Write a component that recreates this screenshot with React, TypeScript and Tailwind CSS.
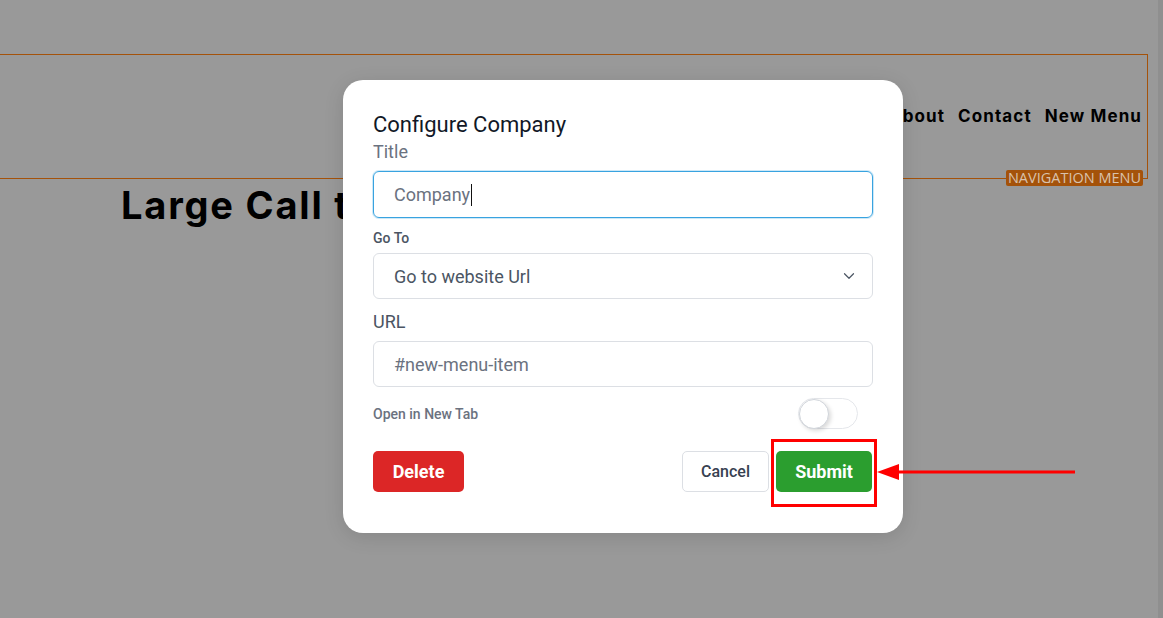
import { ChevronDown } from 'lucide-react';

function Background() {
  return (
    <div className="flex min-h-[618px] bg-[#999999]" style={{ fontFamily: 'Inter, "Open Sans", sans-serif' }}>
      <div className="flex-1">
        <div className="relative mt-[54px] h-[125px] w-[1148px] border-t border-r border-b border-[#a4520a]">
          <nav className="flex h-full items-center justify-end gap-[13px] pr-[5px] pt-[1px] text-[17px] font-bold tracking-[1.1px] text-black">
            <span>About</span>
            <span>Contact</span>
            <span>New Menu</span>
          </nav>
          <span
            className="absolute right-[4px] bottom-[-8px] rounded-[2px] bg-[#a4520a] px-[2px] text-[14.5px] leading-[16px] text-[#d9c2ad]"
            style={{ fontFamily: '"Open Sans", sans-serif' }}
          >
            NAVIGATION MENU
          </span>
        </div>
        <div className="mt-[1px] ml-[121px] w-[222px] overflow-hidden">
          <h1 className="text-[38px] leading-[50px] font-bold tracking-[1.8px] whitespace-nowrap text-black">
            Large Call to Action
          </h1>
        </div>
      </div>
      <div className="w-[5px] bg-[#8f8f8f]" />
    </div>
  );
}

function Toggle() {
  return (
    <div className="mr-[15px] flex h-[31px] w-[60px] items-center rounded-full border border-[#e5e7eb] bg-white">
      <div className="h-[30px] w-[30px] rounded-full border border-[#d1d5db] bg-white shadow-[2px_2px_4px_rgba(0,0,0,0.15)]" />
    </div>
  );
}

function Modal() {
  return (
    <div
      className="absolute top-[80px] left-[343px] w-[560px] rounded-[20px] bg-white px-[30px] pt-[30px] pb-[41px] shadow-[0_4px_20px_rgba(0,0,0,0.12)]"
      style={{ fontFamily: 'Roboto, "Liberation Sans", sans-serif' }}
    >
      <h2 className="text-[22px] leading-[30px] text-[#111827]">Configure Company</h2>
      <label className="mt-[1px] block text-[18px] leading-[22px] text-[#6b7280]">Title</label>
      <div className="mt-[8px] flex h-[47px] items-center rounded-[6px] border border-[#38a3e0] px-[20px] text-[18px] text-[#6b7280] shadow-[0_0_0_1px_rgba(56,163,224,0.25)]">
        Company<span className="ml-[1px] inline-block h-[22px] w-[1px] bg-[#111]" />
      </div>
      <label className="mt-[10px] block text-[14px] leading-[20px] font-medium text-[#4b5563]">Go To</label>
      <div className="mt-[5px] flex h-[46px] items-center justify-between rounded-[6px] border border-[#dcdfe4] pr-[14px] pl-[20px] text-[18px] text-[#4b5563]">
        <span>Go to website Url</span>
        <ChevronDown size={18} strokeWidth={1.6} className="text-[#4b5563]" />
      </div>
      <label className="mt-[12px] block text-[18px] leading-[22px] text-[#4b5563]">URL</label>
      <div className="mt-[8px] flex h-[46px] items-center rounded-[6px] border border-[#dcdfe4] px-[20px] text-[18px] text-[#6b7280]">
        #new-menu-item
      </div>
      <div className="mt-[11px] flex h-[31px] items-center justify-between">
        <span className="text-[14px] leading-[20px] font-medium text-[#6b7280]">Open in New Tab</span>
        <Toggle />
      </div>
      <div className="mt-[22px] flex items-center justify-between">
        <button className="h-[41px] w-[91px] rounded-[5px] bg-[#dc2626] text-[18px] font-bold text-white">Delete</button>
        <div className="flex gap-[7px] pr-[1px]">
          <button className="h-[41px] w-[87px] rounded-[5px] border border-[#dcdfe4] bg-white text-[16px] font-medium text-[#374151]">
            Cancel
          </button>
          <button className="h-[41px] w-[96px] rounded-[5px] bg-[#2b9e2f] text-[18px] font-bold text-white">Submit</button>
        </div>
      </div>
    </div>
  );
}

function Annotation() {
  return (
    <>
      <div className="absolute top-[439px] left-[771px] h-[68px] w-[106px] border-[3px] border-[#ff0000]" />
      <svg className="absolute top-[462px] left-[876px]" width="202" height="22" viewBox="0 0 202 22">
        <line x1="20" y1="10" x2="199" y2="10" stroke="#ff0000" strokeWidth="3" />
        <polygon points="1,10 23,2 23,18" fill="#ff0000" />
      </svg>
    </>
  );
}

export default function App() {
  return (
    <div className="relative h-[618px] w-[1163px] overflow-hidden">
      <Background />
      <Modal />
      <Annotation />
    </div>
  );
}
